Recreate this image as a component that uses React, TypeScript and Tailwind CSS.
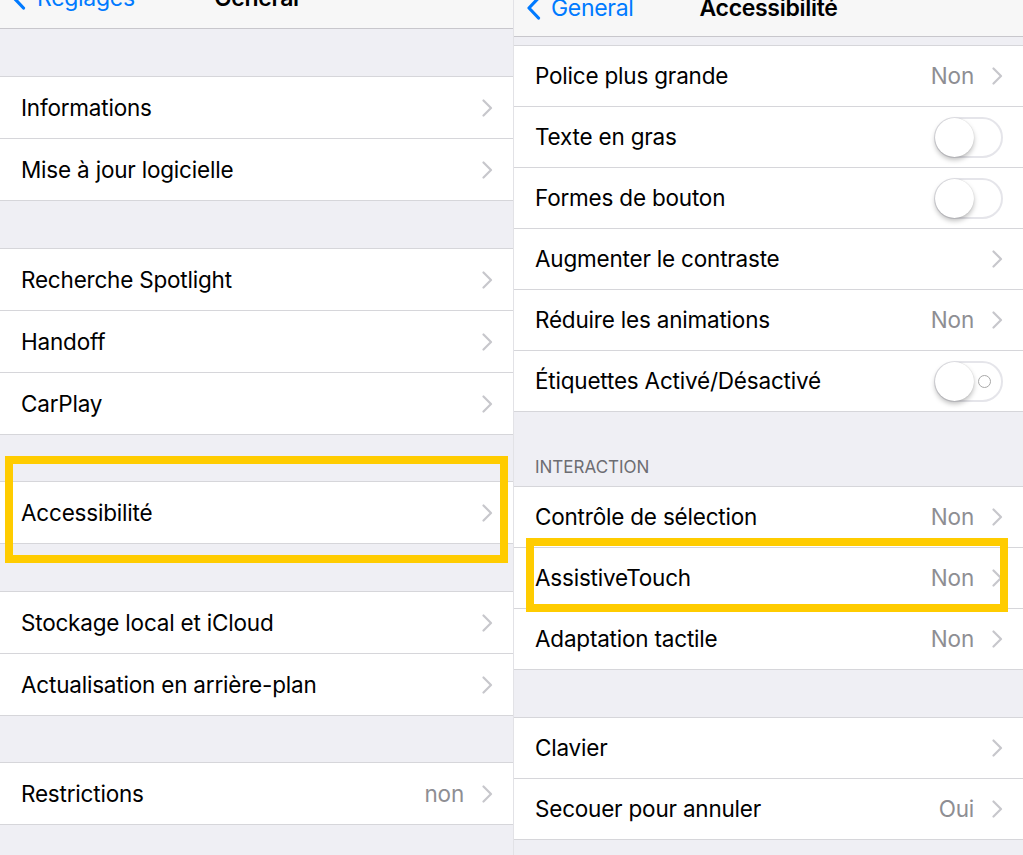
import React from "react";

const FONT = { fontFamily: "Inter, 'Noto Sans', 'Liberation Sans', sans-serif" };

function Chevron() {
  return (
    <svg width="11" height="18" viewBox="0 0 11 18" className="shrink-0">
      <path d="M1.5 1.5 L9 9 L1.5 16.5" fill="none" stroke="#c7c7cc" strokeWidth="2.2" strokeLinecap="round" strokeLinejoin="round" />
    </svg>
  );
}

function BackChevron() {
  return (
    <svg width="15" height="24" viewBox="0 0 15 24" className="shrink-0">
      <path d="M12.5 2 L3 12 L12.5 22" fill="none" stroke="#007aff" strokeWidth="3.2" strokeLinecap="round" strokeLinejoin="round" />
    </svg>
  );
}

function Switch({ label = false }: { label?: boolean }) {
  return (
    <div className="relative w-[69px] h-[41px] rounded-full border-2 border-[#e5e5ea] bg-white shrink-0">
      <div className="absolute left-[-1px] top-[-1px] w-[39px] h-[39px] rounded-full bg-white shadow-[0_3px_5px_rgba(0,0,0,0.25),0_0_1px_rgba(0,0,0,0.2)]" />
      {label && (
        <div className="absolute right-[10px] top-[12px] w-[13px] h-[13px] rounded-full border-[1.5px] border-[#a8a8a8]" />
      )}
    </div>
  );
}

type Row = { label: string; value?: string; chevron?: boolean; toggle?: "plain" | "label" };

function Section({ rows, inset, right, rowH }: { rows: Row[]; inset: string; right: string; rowH: string }) {
  return (
    <div className="bg-white">
      <div className="h-px bg-[#d6d6da]" />
      {rows.map((r, i) => (
        <div key={r.label}>
          {i > 0 && <div className={`h-px bg-[#d6d6da] ${inset}`} />}
          <div className={`${rowH} flex items-center ${inset} ${right}`}>
            <span className="flex-1 text-[22.5px] text-black tracking-[-0.2px]">{r.label}</span>
            {r.value && (
              <span className="text-[22.5px] text-[#8e8e93] tracking-[-0.2px] mr-[18px]">{r.value}</span>
            )}
            {r.toggle ? <Switch label={r.toggle === "label"} /> : <Chevron />}
          </div>
        </div>
      ))}
      <div className="h-px bg-[#d6d6da]" />
    </div>
  );
}

export default function App() {
  const L = { inset: "pl-[21px]", right: "pr-[20px]", rowH: "h-[61px]" };
  const R = { inset: "pl-[21px]", right: "pr-[20px]", rowH: "h-[60px]" };
  return (
    <div style={FONT} className="relative w-[1023px] h-[855px] overflow-hidden bg-[#efeff4] flex">
      {/* Left panel */}
      <div className="w-[514px] shrink-0 flex flex-col border-r border-[#e2e2e6]">
        <div className="h-[29px] bg-[#f7f7f7] border-b border-[#c8c7cc] overflow-hidden">
          <div className="relative h-[28px] mt-[-16px] flex items-center">
            <div className="flex items-center pl-[11px] gap-[11px] text-[#007aff] text-[23px] tracking-[-0.3px]">
              <BackChevron />
              <span>Réglages</span>
            </div>
            <span className="absolute left-0 right-0 text-center text-[23px] font-semibold tracking-[-0.3px] text-black">Général</span>
          </div>
        </div>
        <div className="h-[47px]" />
        <Section {...L} rows={[{ label: "Informations" }, { label: "Mise à jour logicielle" }]} />
        <div className="h-[47px]" />
        <Section {...L} rows={[{ label: "Recherche Spotlight" }, { label: "Handoff" }, { label: "CarPlay" }]} />
        <div className="h-[46px]" />
        <Section {...L} rows={[{ label: "Accessibilité" }]} />
        <div className="h-[47px]" />
        <Section {...L} rows={[{ label: "Stockage local et iCloud" }, { label: "Actualisation en arrière-plan" }]} />
        <div className="h-[46px]" />
        <Section {...L} rows={[{ label: "Restrictions", value: "non" }]} />
      </div>

      {/* Right panel */}
      <div className="flex-1 flex flex-col">
        <div className="h-[37px] bg-[#f7f7f7] border-b border-[#c8c7cc] overflow-hidden">
          <div className="relative h-[28px] mt-[-6px] flex items-center">
            <div className="flex items-center pl-[12px] gap-[10px] text-[#007aff] text-[23px] tracking-[-0.3px]">
              <BackChevron />
              <span>General</span>
            </div>
            <span className="absolute left-0 right-0 text-center text-[23px] font-semibold tracking-[-0.3px] text-black">Accessibilité</span>
          </div>
        </div>
        <div className="h-[8px]" />
        <Section
          {...R}
          rows={[
            { label: "Police plus grande", value: "Non" },
            { label: "Texte en gras", toggle: "plain" },
            { label: "Formes de bouton", toggle: "plain" },
            { label: "Augmenter le contraste" },
            { label: "Réduire les animations", value: "Non" },
            { label: "Étiquettes Activé/Désactivé", toggle: "label" },
          ]}
        />
        <div className="h-[74px] flex items-end pl-[21px] pb-[6px]">
          <span className="text-[17px] text-[#6d6d72] tracking-[0px]">INTERACTION</span>
        </div>
        <Section
          {...R}
          rows={[
            { label: "Contrôle de sélection", value: "Non" },
            { label: "AssistiveTouch", value: "Non" },
            { label: "Adaptation tactile", value: "Non" },
          ]}
        />
        <div className="h-[47px]" />
        <Section {...R} rows={[{ label: "Clavier" }, { label: "Secouer pour annuler", value: "Oui" }]} />
      </div>

      {/* Highlight boxes */}
      <div className="absolute left-[5px] top-[456px] w-[503px] h-[107px] border-[8px] border-[#ffcc00]" />
      <div className="absolute left-[526px] top-[538px] w-[482px] h-[74px] border-[8px] border-[#ffcc00]" />
    </div>
  );
}
